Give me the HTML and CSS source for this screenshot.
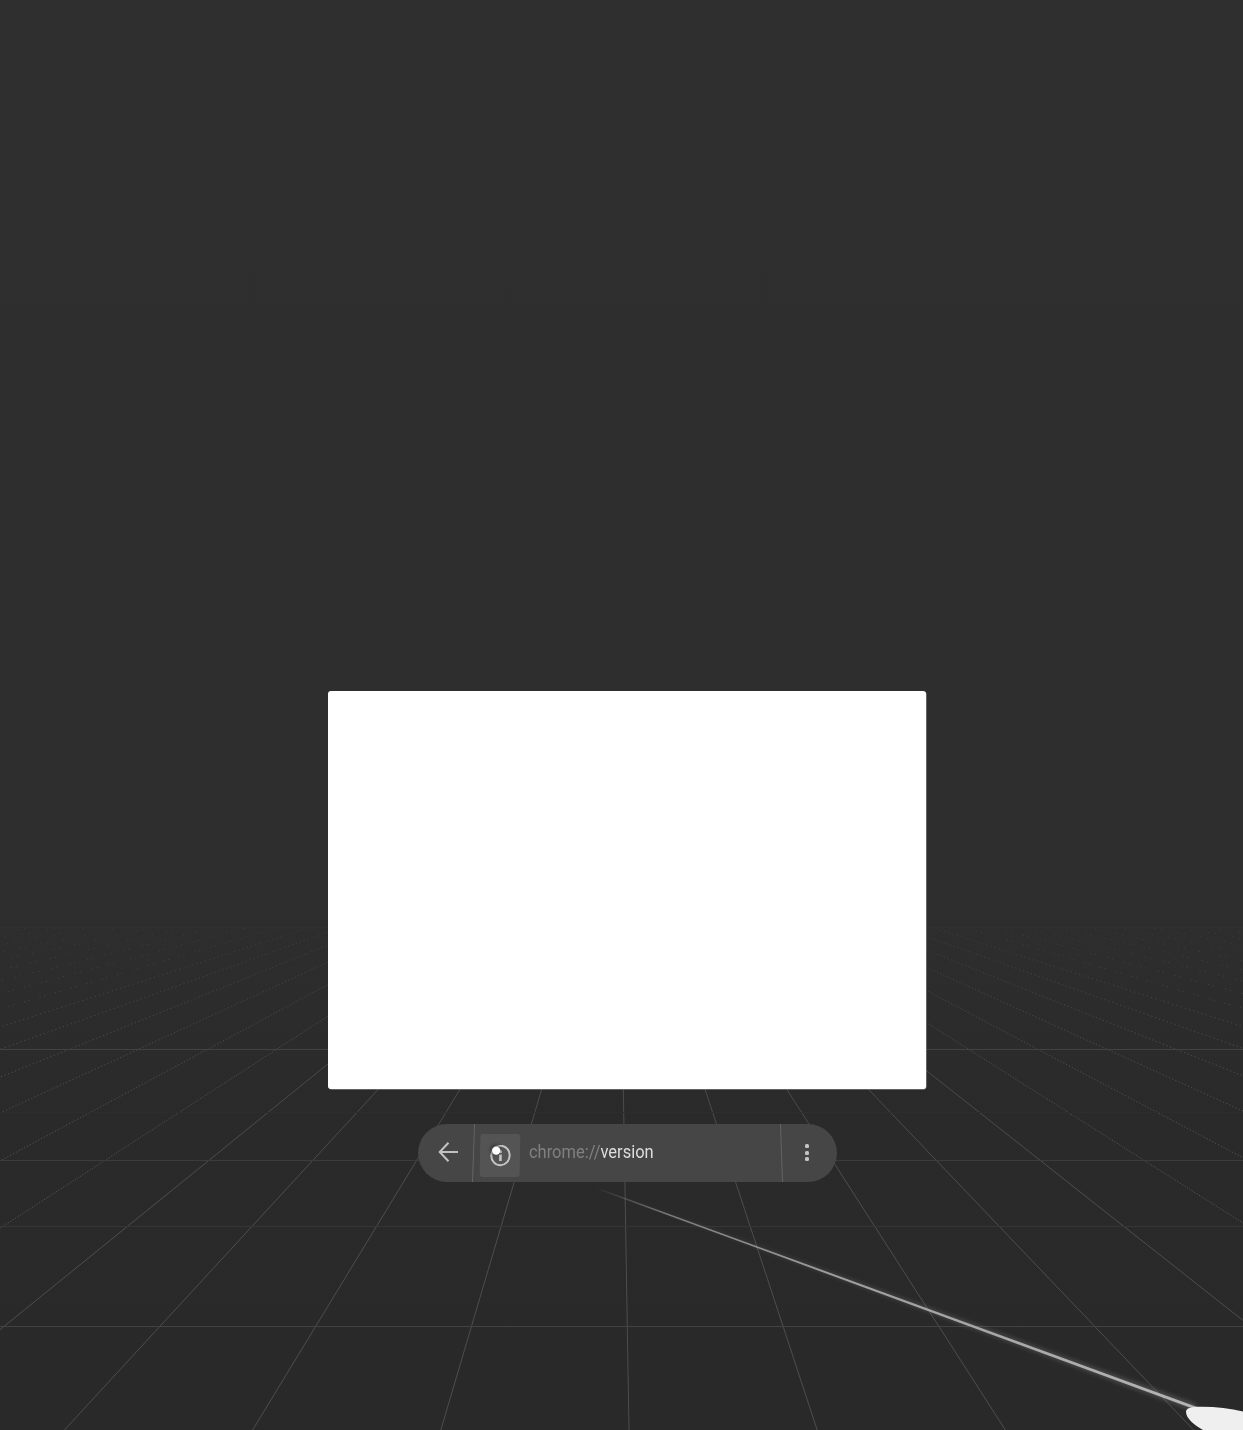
FILE: index.html
```html
<!DOCTYPE html>
<html lang="en">
<head>
<meta charset="utf-8">
<title>chrome://version</title>
<link rel="stylesheet" href="styles.css">
</head>
<body>
<main class="scene">
  <svg class="floor" viewBox="0 0 1243 1430" aria-hidden="true">
    <defs>
      <linearGradient id="distance" x1="0" y1="0" x2="0" y2="1">
        <stop offset="0" stop-color="#fff" stop-opacity=".35"/>
        <stop offset=".25" stop-color="#fff" stop-opacity=".85"/>
        <stop offset=".5" stop-color="#fff"/>
      </linearGradient>
      <mask id="ground" maskUnits="userSpaceOnUse" x="0" y="0" width="1243" height="1430">
        <rect x="0" y="927" width="1243" height="503" fill="url(#distance)"/>
      </mask>
    </defs>
    <g mask="url(#ground)"><g id="rays"></g></g>
    <g class="rows">
      <path class="row-horizon" d="M0 927.5H1243"/>
      <path class="row-faint" d="M0 952.5H1243"/>
      <path class="row-near" d="M0 1049.5H1243"/>
      <path class="row-faint" d="M0 1112.5H1243"/>
      <path class="row-mid" d="M0 1160.5H1243"/>
      <path class="row-far" d="M0 1226.5H1243"/>
      <path class="row-near" d="M0 1326.5H1243"/>
    </g>
  </svg>

  <section class="page"></section>

  <nav class="urlbar">
    <button class="back" aria-label="Back">
      <svg width="20" height="20" viewBox="0 0 20 20"><path d="M20 10H1.5M10.500 .7L1.700 10L10.500 19.3"/></svg>
    </button>
    <div class="address">
      <span class="security">
        <svg width="22" height="22" viewBox="0 0 22 22">
          <ellipse cx="11.500" cy="10.500" rx="9.200" ry="9.700"/>
          <path d="M11.500 9.500v6.500M11.500 5.500v2.500"/>
        </svg>
      </span>
      <span class="url"><span class="scheme">chrome://</span>version</span>
    </div>
    <button class="menu" aria-label="Menu"><i></i><i></i><i></i></button>
  </nav>

  <svg class="pointer" viewBox="0 0 1243 1430" aria-hidden="true">
    <defs>
      <linearGradient id="beam" gradientUnits="userSpaceOnUse" x1="596" y1="1187" x2="1196" y2="1408">
        <stop offset="0" stop-color="#b0b0b0" stop-opacity="0"/>
        <stop offset=".12" stop-color="#b0b0b0" stop-opacity=".6"/>
        <stop offset=".4" stop-color="#b0b0b0" stop-opacity=".85"/>
        <stop offset="1" stop-color="#b4b4b4"/>
      </linearGradient>
      <filter id="soft" x="-10%" y="-10%" width="120%" height="120%"><feGaussianBlur stdDeviation="2.2"/></filter>
      <filter id="halo" x="-60%" y="-60%" width="220%" height="220%"><feGaussianBlur stdDeviation="1.4"/></filter>
    </defs>
    <path d="M598 1188L1196 1404V1412Z" fill="url(#beam)" opacity=".25" filter="url(#soft)"/>
    <path d="M598 1188L1197 1407L1196 1409.8L598 1189.400Z" fill="url(#beam)"/>
    <path d="M1186 1412c0-4 5-5 14-5.2c15-.2 30 2 43 4.600V1430H1203c-9-5-17-12-17-18Z" fill="#efefef"/>
    <circle cx="495.200" cy="1149.500" r="5.500" fill="#333" opacity=".6" filter="url(#halo)"/>
    <circle cx="496.200" cy="1150.600" r="4.200" fill="#fff"/>
  </svg>
</main>
<script src="floor.js"></script>
</body>
</html>
```
FILE: styles.css
```css
* { box-sizing: border-box; }
body { margin: 0; background: #2e2e2e; }
.scene {
  position: relative;
  display: flex;
  flex-direction: column;
  width: 1243px;
  height: 1430px;
  padding-top: 690.5px;
  overflow: hidden;
  background: linear-gradient(#2f2f2f 0, #2e2e2e 900px, #2a2a2a 1120px, #292929 100%);
  font-family: Roboto, "Liberation Sans", sans-serif;
}
.floor, .pointer {
  position: absolute;
  inset: 0;
  width: 1243px;
  height: 1430px;
  pointer-events: none;
}
.ray { stroke: #707070; stroke-width: 1; fill: none; }
.rows path { stroke-width: 1; }
.rows .row-horizon { stroke: #303030; }
.rows .row-faint { stroke: #2d2d2d; }
.rows .row-far { stroke: #353535; }
.rows .row-mid { stroke: #3c3c3c; }
.rows .row-near { stroke: #424242; }

.page {
  position: relative;
  width: 598px;
  height: 398.5px;
  margin-left: 328px;
  border-radius: 3px;
  background: #fff;
  box-shadow: .5px .5px 0 #999;
}
.urlbar {
  position: relative;
  display: flex;
  width: 419px;
  height: 58.5px;
  margin: 34.5px 0 0 418px;
  border-radius: 30px;
  background: #464646;
}
.back, .menu {
  display: flex;
  align-items: center;
  padding: 0;
  border: 0;
  background: none;
}
.back { width: 55px; padding: 0 0 1px 20px; }
.back svg { fill: none; stroke: #c2c2c2; stroke-width: 2; }
.address {
  display: flex;
  align-items: center;
  width: 309px;
  padding-left: 7px;
}
.address::before, .address::after {
  content: "";
  flex: none;
  width: 1px;
  height: 58px;
  background: #646464;
}
.address::before { margin-left: -7px; transform: skewX(-2deg); }
.address::after { margin-left: auto; transform: skewX(2deg); }
.security {
  display: flex;
  align-items: center;
  justify-content: center;
  flex: none;
  width: 40px;
  height: 43px;
  margin: 5px 0 0 6px;
  border-radius: 3px;
  background: #545454;
  transform: skewX(-1deg);
}
.security svg { fill: none; stroke: #c4c4c4; stroke-width: 2; }
.security path { stroke-width: 2.6; }
.url {
  width: 125px;
  margin: 0 0 1px 9px;
  color: #dedede;
  font-size: 18px;
  line-height: 24px;
  white-space: nowrap;
  transform: scaleX(.915);
  transform-origin: left center;
}
.scheme { color: #808080; }
.menu {
  flex: 1;
  flex-direction: column;
  justify-content: center;
  gap: 2.5px;
  padding-right: 5px;
}
.menu i {
  width: 4px;
  height: 4px;
  border-radius: 1.5px;
  background: #c6c6c6;
}
```
FILE: floor.js
```js
// Floor lines fan out from a vanishing point behind the page.
const rays = document.getElementById('rays');
for (let n = -20; n <= 20; n++) {
  const line = document.createElementNS('http://www.w3.org/2000/svg', 'path');
  const distance = Math.abs(n);
  const step = distance * 0.3128;
  const endX = 629 + n * 188.2;
  line.setAttribute('d', `M619 828L${endX} 1430`);
  line.setAttribute('class', 'ray');
  line.setAttribute('opacity', distance > 4 ? 0.6 : 0.52);
  if (distance > 10) {
    line.setAttribute('stroke-dasharray', `1.2 ${step.toFixed(2)} 1.2 ${(step * 3).toFixed(2)}`);
  } else if (distance > 4) {
    line.setAttribute('stroke-dasharray', `1.3 ${step.toFixed(2)}`);
  }
  rays.appendChild(line);
}
```
